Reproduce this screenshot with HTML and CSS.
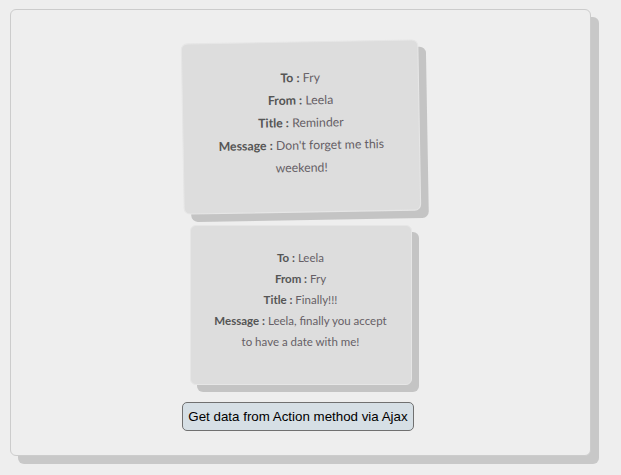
FILE: index.html
```html
<!DOCTYPE html>
<html lang="en">
<head>
    <meta charset="UTF-8">
    <title>Notes</title>
    <link rel="stylesheet" href="styles.css">
</head>
<body>
    <div class="container">
        <div class="note note-active">
            <p><b>To :</b> Fry</p>
            <p><b>From :</b> Leela</p>
            <p><b>Title :</b> Reminder</p>
            <p><b>Message :</b> Don't forget me this weekend!</p>
        </div>

        <div class="note">
            <p><b>To :</b> Leela</p>
            <p><b>From :</b> Fry</p>
            <p><b>Title :</b> Finally!!!</p>
            <p><b>Message :</b> Leela, finally you accept to have a date with me!</p>
        </div>

        <button class="ajax-button">Get data from Action method via Ajax</button>
    </div>
</body>
</html>
```

FILE: styles.css
```css
/* page */
html,
body {
    height: 100%;
}

body {
    margin: 0;
    padding: 9px 0 0 10px;
    box-sizing: border-box;
    background-color: #eeeeee;
    font-family: 'Lato', 'DejaVu Sans', sans-serif;
}

/* outer box */
.container {
    width: 581px;
    height: 447px;
    box-sizing: border-box;
    border: 1px solid #cccccc;
    border-radius: 6px;
    background-color: #eeeeee;
    box-shadow: 8px 8px 0 0 #c8c8c8;
    display: flex;
    flex-direction: column;
    align-items: center;
}

/* notes */
.note {
    width: 222px;
    height: 160px;
    box-sizing: border-box;
    padding: 21px 20px 0;
    background-color: #dddddd;
    border: 1px solid #e6e6e6;
    border-radius: 6px;
    box-shadow: 7px 7px 0 #c4c4c4;
    text-align: center;
    font-size: 11.5px;
    line-height: 21px;
    color: #665f66;
}

.note p {
    margin: 0;
}

.note b {
    color: #555555;
}

.note-active {
    margin-top: 37px;
    margin-bottom: 18px;
    padding-top: 22px;
    transform: rotate(-1deg) scale(1.07);
}

/* button */
.ajax-button {
    margin-top: 17px;
    margin-right: 5px;
    padding: 6px 5px;
    font-family: 'Liberation Sans', Arial, sans-serif;
    font-size: 13.33px;
    line-height: 15px;
    color: #000000;
    background-color: #d6dfe5;
    border: 1px solid #707070;
    border-radius: 5px;
}
```
